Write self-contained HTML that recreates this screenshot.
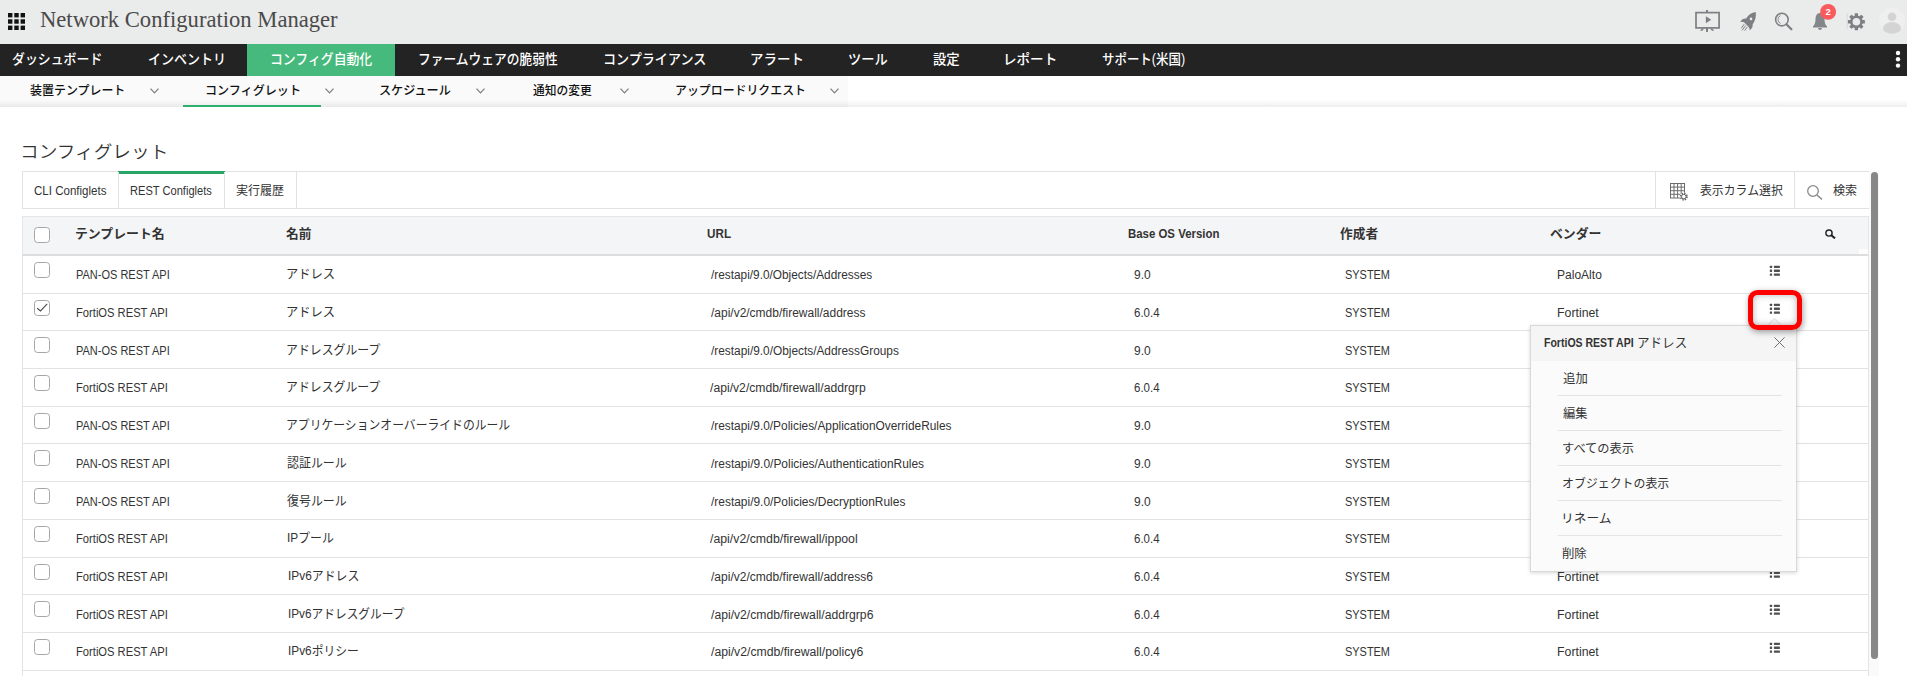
<!DOCTYPE html>
<html lang="ja"><head><meta charset="utf-8"><title>Network Configuration Manager</title>
<style>
*{box-sizing:border-box;margin:0;padding:0}
html,body{width:1907px;height:676px;overflow:hidden;background:#fff}
body{position:relative;font-family:"Liberation Sans","Noto Sans CJK JP",sans-serif;font-size:12px;color:#333}
div,span,svg{position:absolute}
.tx{white-space:nowrap;transform-origin:0 50%}
#hdr{left:0;top:0;width:1907px;height:44px;background:#eaebeb}
#grid{left:8px;top:13px}
.ttl{top:7.4px;font-family:"Liberation Serif",serif;font-size:22.9px;line-height:26px;color:#4a4a4a}
#hdr_right{left:1685px;top:0}
#nav{left:0;top:44px;width:1907px;height:32px;background:#232323}
#nav .act{left:247px;top:0;width:148px;height:32px;background:#46b97c}
.n{font-weight:500;top:44px;height:32px;line-height:30px;color:#fff;font-size:14px}
#dots{left:1895px;top:50.2px}
#sub{left:0;top:76px;width:848px;height:31px;background:#fafafa}
#subsh{left:0;top:100px;width:1907px;height:7.2px;background:linear-gradient(rgba(0,0,0,0),rgba(0,0,0,.065))}
#subul{left:183px;top:104.8px;width:138px;height:2.3px;background:#2eb06d}
.s{font-weight:500;top:76px;height:28px;line-height:30px;font-size:12.2px;color:#111}
.chev{top:88px}
.h1{top:137.5px;font-size:17.5px;line-height:28px;font-weight:350;color:#333}
#tabs{left:22px;top:171px;width:1848px;height:38px;border:1px solid #e2e2e2;background:#fff}
#tabs .d{top:0;width:1px;height:36px;background:#e2e2e2}
#tabs .g{left:95px;top:-1px;width:107px;height:3px;background:#27a567}
.t{top:172px;height:36px;line-height:39.4px;font-size:12px;color:#333}
.tj{line-height:39px}
#colsel{left:1670px;top:183px}
#search_thin{left:1806.5px;top:184.5px}
#th{left:22px;top:216px;width:1847px;height:40px;background:#f4f5f6;border:1px solid #e6e6e6;border-bottom:2px solid #dddddd}
#thfix{left:1859px;top:249px;width:9px;height:5px;background:#fdfdfd}
.h{top:216px;height:38px;line-height:36px;font-size:12.6px;font-weight:bold;color:#333}
#search_bold{left:1825px;top:228.5px}
.cb{width:15.5px;height:15.5px;border:1px solid #a6a6a6;border-radius:3.5px;background:#fff}
.cb svg{left:0;top:0}
#tb{left:22px;top:256px;width:1847px;height:420px;border-left:1px solid #e4e4e4;border-right:1px solid #e4e4e4}
.rl{left:23px;width:1845px;height:1px;background:#e2e2e2}
.c{height:36.7px;line-height:39.8px;font-size:12px;color:#333}
.cj{font-size:12.6px;line-height:37.6px}
.li{left:1769px}
#sbt{left:1869px;top:171px;width:10px;height:505px;background:#fafafa}
#sb{left:1871px;top:171.6px;width:7px;height:487.4px;border-radius:3.5px;background:#878787}
#red{left:1748px;top:290px;width:54px;height:40px;border:5px solid #fe0000;border-radius:9.5px;box-shadow:1px 2px 6px rgba(0,0,0,.38), inset 0 0 7px rgba(0,0,0,.3)}
#pop{left:1530px;top:325px;width:267px;height:246.6px;background:#fbfbfb;border:1px solid #d9d9d9;box-shadow:0 1px 4px rgba(0,0,0,.16)}
#pop .ph{left:0;top:0;width:265px;height:35.3px;background:#f5f5f5}
#pop .sp{left:26.8px;width:224px;height:1px;background:#e4e4e4}
#arrow{left:238.3px;top:-5.6px;width:11px;height:11px;background:#f7f7f7;border:1px solid #e6e6e6;transform:rotate(45deg)}
.pt{top:326px;line-height:35px;font-size:12px;font-weight:bold;color:#333}
.ptj{font-weight:normal;font-size:13px;line-height:34px}
.x{left:1774.2px;top:336.8px}
.pi{height:35px;line-height:38px;font-size:12px;color:#333}

</style></head><body>
<div id="hdr"></div>
<svg id="grid" width="17" height="17" viewBox="0 0 17 17"><g fill="#111"><rect x="0" y="0" width="4.4" height="4.4"/><rect x="6.3" y="0" width="4.4" height="4.4"/><rect x="12.6" y="0" width="4.4" height="4.4"/><rect x="0" y="6.3" width="4.4" height="4.4"/><rect x="6.3" y="6.3" width="4.4" height="4.4"/><rect x="12.6" y="6.3" width="4.4" height="4.4"/><rect x="0" y="12.6" width="4.4" height="4.4"/><rect x="6.3" y="12.6" width="4.4" height="4.4"/><rect x="12.6" y="12.6" width="4.4" height="4.4"/></g></svg>
<div class="tx ttl" style="left:39.66px;transform:scaleX(0.9878)">Network Configuration Manager</div>
<svg id="hdr_right" width="222" height="44" viewBox="1685 0 222 44">
<g fill="none" stroke="#7c8083" stroke-width="1.7"><rect x="1696" y="12.6" width="23.1" height="15.3"/></g>
<g fill="#7c8083"><rect x="1706" y="10" width="2" height="2.4"/><rect x="1706" y="28" width="2" height="3.9"/><path d="M1702 28.4 L1704.2 28.4 L1702.3 30.8 L1700 30.8 Z"/><path d="M1710 28.4 L1712.2 28.4 L1714.2 30.8 L1712 30.8 Z"/><path d="M1705.9 16.2 L1711.2 19.7 L1705.9 23.2 Z"/></g>
<g fill="#7c8083"><path d="M1755.8 12.1 C1751.5 12.6 1748.3 14.9 1746.2 18.6 C1744 18.2 1741.8 19.3 1740 22 C1741.6 21.7 1743 21.9 1744.3 22.6 L1748.6 26.9 C1749.4 27.9 1749.8 29 1749.5 30.4 C1752 28.8 1753 26.7 1752.6 24.5 C1755.2 21.4 1756.3 16.6 1755.8 12.1 Z"/></g>
<circle cx="1751" cy="18.9" r="1.35" fill="#eaebeb"/>
<g stroke="#7c8083" stroke-width="1" fill="none"><path d="M1744.2 24.2 L1741.3 28.2 M1745.7 25.5 L1742 30.4 M1747.3 27 L1744.6 30.6"/></g>
<circle cx="1781.9" cy="19.6" r="6.3" fill="none" stroke="#7c8083" stroke-width="1.6"/>
<path d="M1786.4 24.3 L1791.4 29.3" stroke="#7c8083" stroke-width="2.2" stroke-linecap="round" fill="none"/>
<path d="M1780.6 15.6 A4.2 4.2 0 0 0 1780.6 23.4" fill="none" stroke="#8b8f92" stroke-width="1"/>
<path d="M1820 13 C1816.6 13 1815.6 16 1815.5 19.5 C1815.4 23 1814.6 25 1813 26.3 L1813 27.4 L1827 27.4 L1827 26.3 C1825.4 25 1824.6 23 1824.5 19.5 C1824.4 16 1823.4 13 1820 13 Z" fill="#83878a"/>
<path d="M1818.1 28 L1821.9 28 C1821.9 29.3 1821 30 1820 30 C1819 30 1818.1 29.3 1818.1 28 Z" fill="#83878a"/>
<circle cx="1828.1" cy="11.9" r="7.95" fill="#f95a5e"/>
<text x="1828.1" y="15.4" text-anchor="middle" font-family="Liberation Sans, sans-serif" font-size="9.6" font-weight="bold" fill="#fff">2</text>
<rect x="1846.7" y="13" width="1" height="15.6" fill="#d9d9da"/>
<g transform="translate(1856.4 21.8)" fill="#7c8083"><g id="teeth"><rect x="-1.7" y="-8.5" width="3.4" height="17" rx=".6"/><rect x="-1.7" y="-8.5" width="3.4" height="17" rx=".6" transform="rotate(45)"/><rect x="-1.7" y="-8.5" width="3.4" height="17" rx=".6" transform="rotate(90)"/><rect x="-1.7" y="-8.5" width="3.4" height="17" rx=".6" transform="rotate(135)"/></g><circle r="6.4"/><circle r="3.8" fill="#eaebeb"/></g>
<defs><clipPath id="av"><circle cx="1892" cy="20.8" r="13"/></clipPath></defs>
<circle cx="1892" cy="20.8" r="13" fill="#efefef"/>
<g clip-path="url(#av)" fill="#d4d4d4"><circle cx="1892" cy="16.8" r="4.3"/><ellipse cx="1892" cy="28.6" rx="9" ry="6.6"/></g>
</svg>
<div id="nav"><div class="act"></div></div>
<div class="tx n" style="left:12.34px;transform:scaleX(0.9212)">ダッシュボード</div>
<div class="tx n" style="left:148.05px;transform:scaleX(0.9273)">インベントリ</div>
<div class="tx n" style="left:270.32px;transform:scaleX(0.9182)">コンフィグ自動化</div>
<div class="tx n" style="left:417.96px;transform:scaleX(0.9090)">ファームウェアの脆弱性</div>
<div class="tx n" style="left:602.79px;transform:scaleX(0.9331)">コンプライアンス</div>
<div class="tx n" style="left:750.05px;transform:scaleX(0.9616)">アラート</div>
<div class="tx n" style="left:847.60px;transform:scaleX(0.9437)">ツール</div>
<div class="tx n" style="left:933.49px;transform:scaleX(0.9541)">設定</div>
<div class="tx n" style="left:1003.44px;transform:scaleX(0.9684)">レポート</div>
<div class="tx n" style="left:1102.43px;transform:scaleX(0.8898)">サポート(米国)</div>
<svg id="dots" width="6" height="20" viewBox="0 0 6 20"><g fill="#fff"><circle cx="3" cy="3" r="2.2"/><circle cx="3" cy="9.3" r="2.2"/><circle cx="3" cy="15.6" r="2.2"/></g></svg>
<div id="sub"></div><div id="subsh"></div><div id="subul"></div>
<div class="tx s" style="left:30.42px;transform:scaleX(0.9815)">装置テンプレート</div>
<svg class="chev" style="left:150.3px" width="9" height="6" viewBox="0 0 9 6"><path d="M.5 .6 L4.5 4.9 L8.5 .6" fill="none" stroke="#808080" stroke-width="1.3"/></svg>
<div class="tx s" style="left:204.54px;transform:scaleX(0.9903)">コンフィグレット</div>
<svg class="chev" style="left:324.7px" width="9" height="6" viewBox="0 0 9 6"><path d="M.5 .6 L4.5 4.9 L8.5 .6" fill="none" stroke="#808080" stroke-width="1.3"/></svg>
<div class="tx s" style="left:378.82px;transform:scaleX(0.9924)">スケジュール</div>
<svg class="chev" style="left:476.0px" width="9" height="6" viewBox="0 0 9 6"><path d="M.5 .6 L4.5 4.9 L8.5 .6" fill="none" stroke="#808080" stroke-width="1.3"/></svg>
<div class="tx s" style="left:533.16px;transform:scaleX(0.9618)">通知の変更</div>
<svg class="chev" style="left:619.5px" width="9" height="6" viewBox="0 0 9 6"><path d="M.5 .6 L4.5 4.9 L8.5 .6" fill="none" stroke="#808080" stroke-width="1.3"/></svg>
<div class="tx s" style="left:674.65px;transform:scaleX(0.9771)">アップロードリクエスト</div>
<svg class="chev" style="left:829.9px" width="9" height="6" viewBox="0 0 9 6"><path d="M.5 .6 L4.5 4.9 L8.5 .6" fill="none" stroke="#808080" stroke-width="1.3"/></svg>
<div class="tx h1" style="left:19.81px;transform:scaleX(1.0659)">コンフィグレット</div>
<div id="tabs"><div class="g"></div><div class="d" style="left:95px"></div><div class="d" style="left:201px"></div><div class="d" style="left:273px"></div><div class="d" style="left:1632px"></div><div class="d" style="left:1771px"></div></div>
<div class="tx t" style="left:34.22px;transform:scaleX(0.9620)">CLI Configlets</div>
<div class="tx t" style="left:130.47px;transform:scaleX(0.9254)">REST Configlets</div>
<div class="tx t tj" style="left:236.44px;transform:scaleX(1.0031)">実行履歴</div>
<svg id="colsel" width="19" height="19" viewBox="0 0 19 19"><g fill="none" stroke="#6c6c6c" stroke-width="1"><rect x=".5" y=".5" width="14" height="14.5"/><path d="M4 .5 V15 M7.6 .5 V15 M11.2 .5 V15 M.5 4.1 H14.5 M.5 7.7 H14.5 M.5 11.3 H14.5"/></g><circle cx="13.8" cy="13.6" r="4.2" fill="#fff"/><circle cx="13.8" cy="13.6" r="3.1" fill="none" stroke="#666" stroke-width="1.9" stroke-dasharray="1.3 1.13"/><circle cx="13.8" cy="13.6" r="2.3" fill="none" stroke="#666" stroke-width="1"/></svg>
<div class="tx t tj" style="left:1700.09px;transform:scaleX(0.9894)">表示カラム選択</div>
<svg id="search_thin" width="16" height="15" viewBox="0 0 16 15"><circle cx="6" cy="6" r="5.3" fill="none" stroke="#8a8a8a" stroke-width="1.3"/><path d="M10 10 L15 14.4" stroke="#8a8a8a" stroke-width="1.4" fill="none"/></svg>
<div class="tx t tj" style="left:1833.31px;transform:scaleX(1.0085)">検索</div>
<div id="th"></div><div id="thfix"></div>
<span class="cb" style="left:34px;top:227px"></span>
<div class="tx h hj" style="left:74.84px;transform:scaleX(1.0222)">テンプレート名</div>
<div class="tx h hj" style="left:286.21px;transform:scaleX(1.0053)">名前</div>
<div class="tx h" style="left:707.18px;transform:scaleX(0.9278)">URL</div>
<div class="tx h" style="left:1128.47px;transform:scaleX(0.9068)">Base OS Version</div>
<div class="tx h hj" style="left:1339.60px;transform:scaleX(1.0100)">作成者</div>
<div class="tx h hj" style="left:1549.73px;transform:scaleX(1.0211)">ベンダー</div>
<svg id="search_bold" width="11" height="10" viewBox="0 0 11 10"><circle cx="4" cy="4" r="3.1" fill="none" stroke="#222" stroke-width="1.45"/><path d="M6.3 6.2 L10 9.3" stroke="#222" stroke-width="2.1" fill="none"/></svg>
<div id="tb"></div>
<div class="rl" style="top:293px"></div>
<span class="cb" style="left:34px;top:262.2px"></span>
<div class="tx c" style="left:75.51px;transform:scaleX(0.9165);top:256.30px">PAN-OS REST API</div>
<div class="tx c cj" style="left:286.45px;transform:scaleX(0.9756);top:256.30px">アドレス</div>
<div class="tx c" style="left:710.71px;transform:scaleX(0.9860);top:256.30px">/restapi/9.0/Objects/Addresses</div>
<div class="tx c" style="left:1134.13px;transform:scaleX(0.9963);top:256.30px">9.0</div>
<div class="tx c" style="left:1345.36px;transform:scaleX(0.9117);top:256.30px">SYSTEM</div>
<div class="tx c" style="left:1556.56px;transform:scaleX(1.0031);top:256.30px">PaloAlto</div>
<svg class="li" style="top:265.2px" width="12" height="12" viewBox="0 0 12 12"><g fill="#505050"><rect x="0.8" y="0.7" width="2.3" height="2.3" rx=".5"/><rect x="4.9" y="0.7" width="6" height="2.3" rx=".4"/><rect x="0.8" y="4.6" width="2.3" height="2.3" rx=".5"/><rect x="4.9" y="4.6" width="6" height="2.3" rx=".4"/><rect x="0.8" y="8.5" width="2.3" height="2.3" rx=".5"/><rect x="4.9" y="8.5" width="6" height="2.3" rx=".4"/></g></svg>
<div class="rl" style="top:330px"></div>
<span class="cb" style="left:34px;top:300.2px"><svg width="13" height="13" viewBox="0 0 13 13"><path d="M2.2 7.2 L5.5 9.9 L12.2 2.9" fill="none" stroke="#4a4a4a" stroke-width="1.1"/></svg></span>
<div class="tx c" style="left:75.92px;transform:scaleX(0.9317);top:294.00px">FortiOS REST API</div>
<div class="tx c cj" style="left:286.45px;transform:scaleX(0.9756);top:294.00px">アドレス</div>
<div class="tx c" style="left:710.73px;transform:scaleX(0.9981);top:294.00px">/api/v2/cmdb/firewall/address</div>
<div class="tx c" style="left:1134.16px;transform:scaleX(0.9559);top:294.00px">6.0.4</div>
<div class="tx c" style="left:1345.36px;transform:scaleX(0.9117);top:294.00px">SYSTEM</div>
<div class="tx c" style="left:1557.25px;transform:scaleX(1.0274);top:294.00px">Fortinet</div>
<svg class="li" style="top:303.2px" width="12" height="12" viewBox="0 0 12 12"><g fill="#505050"><rect x="0.8" y="0.7" width="2.3" height="2.3" rx=".5"/><rect x="4.9" y="0.7" width="6" height="2.3" rx=".4"/><rect x="0.8" y="4.6" width="2.3" height="2.3" rx=".5"/><rect x="4.9" y="4.6" width="6" height="2.3" rx=".4"/><rect x="0.8" y="8.5" width="2.3" height="2.3" rx=".5"/><rect x="4.9" y="8.5" width="6" height="2.3" rx=".4"/></g></svg>
<div class="rl" style="top:368px"></div>
<span class="cb" style="left:34px;top:337.2px"></span>
<div class="tx c" style="left:75.51px;transform:scaleX(0.9165);top:331.70px">PAN-OS REST API</div>
<div class="tx c cj" style="left:286.33px;transform:scaleX(0.9435);top:331.70px">アドレスグループ</div>
<div class="tx c" style="left:710.71px;transform:scaleX(0.9882);top:331.70px">/restapi/9.0/Objects/AddressGroups</div>
<div class="tx c" style="left:1134.13px;transform:scaleX(0.9963);top:331.70px">9.0</div>
<div class="tx c" style="left:1345.36px;transform:scaleX(0.9117);top:331.70px">SYSTEM</div>
<div class="tx c" style="left:1556.56px;transform:scaleX(1.0031);top:331.70px">PaloAlto</div>
<svg class="li" style="top:340.2px" width="12" height="12" viewBox="0 0 12 12"><g fill="#505050"><rect x="0.8" y="0.7" width="2.3" height="2.3" rx=".5"/><rect x="4.9" y="0.7" width="6" height="2.3" rx=".4"/><rect x="0.8" y="4.6" width="2.3" height="2.3" rx=".5"/><rect x="4.9" y="4.6" width="6" height="2.3" rx=".4"/><rect x="0.8" y="8.5" width="2.3" height="2.3" rx=".5"/><rect x="4.9" y="8.5" width="6" height="2.3" rx=".4"/></g></svg>
<div class="rl" style="top:406px"></div>
<span class="cb" style="left:34px;top:375.2px"></span>
<div class="tx c" style="left:75.92px;transform:scaleX(0.9317);top:369.40px">FortiOS REST API</div>
<div class="tx c cj" style="left:286.33px;transform:scaleX(0.9435);top:369.40px">アドレスグループ</div>
<div class="tx c" style="left:710.28px;transform:scaleX(1.0147);top:369.40px">/api/v2/cmdb/firewall/addrgrp</div>
<div class="tx c" style="left:1134.16px;transform:scaleX(0.9559);top:369.40px">6.0.4</div>
<div class="tx c" style="left:1345.36px;transform:scaleX(0.9117);top:369.40px">SYSTEM</div>
<div class="tx c" style="left:1557.25px;transform:scaleX(1.0274);top:369.40px">Fortinet</div>
<svg class="li" style="top:378.2px" width="12" height="12" viewBox="0 0 12 12"><g fill="#505050"><rect x="0.8" y="0.7" width="2.3" height="2.3" rx=".5"/><rect x="4.9" y="0.7" width="6" height="2.3" rx=".4"/><rect x="0.8" y="4.6" width="2.3" height="2.3" rx=".5"/><rect x="4.9" y="4.6" width="6" height="2.3" rx=".4"/><rect x="0.8" y="8.5" width="2.3" height="2.3" rx=".5"/><rect x="4.9" y="8.5" width="6" height="2.3" rx=".4"/></g></svg>
<div class="rl" style="top:443px"></div>
<span class="cb" style="left:34px;top:413.2px"></span>
<div class="tx c" style="left:75.51px;transform:scaleX(0.9165);top:407.10px">PAN-OS REST API</div>
<div class="tx c cj" style="left:286.35px;transform:scaleX(0.9384);top:407.10px">アプリケーションオーバーライドのルール</div>
<div class="tx c" style="left:710.71px;transform:scaleX(0.9907);top:407.10px">/restapi/9.0/Policies/ApplicationOverrideRules</div>
<div class="tx c" style="left:1134.13px;transform:scaleX(0.9963);top:407.10px">9.0</div>
<div class="tx c" style="left:1345.36px;transform:scaleX(0.9117);top:407.10px">SYSTEM</div>
<div class="tx c" style="left:1556.56px;transform:scaleX(1.0031);top:407.10px">PaloAlto</div>
<svg class="li" style="top:416.2px" width="12" height="12" viewBox="0 0 12 12"><g fill="#505050"><rect x="0.8" y="0.7" width="2.3" height="2.3" rx=".5"/><rect x="4.9" y="0.7" width="6" height="2.3" rx=".4"/><rect x="0.8" y="4.6" width="2.3" height="2.3" rx=".5"/><rect x="4.9" y="4.6" width="6" height="2.3" rx=".4"/><rect x="0.8" y="8.5" width="2.3" height="2.3" rx=".5"/><rect x="4.9" y="8.5" width="6" height="2.3" rx=".4"/></g></svg>
<div class="rl" style="top:481px"></div>
<span class="cb" style="left:34px;top:450.2px"></span>
<div class="tx c" style="left:75.51px;transform:scaleX(0.9165);top:444.80px">PAN-OS REST API</div>
<div class="tx c cj" style="left:287.19px;transform:scaleX(0.9495);top:444.80px">認証ルール</div>
<div class="tx c" style="left:710.66px;transform:scaleX(0.9952);top:444.80px">/restapi/9.0/Policies/AuthenticationRules</div>
<div class="tx c" style="left:1134.13px;transform:scaleX(0.9963);top:444.80px">9.0</div>
<div class="tx c" style="left:1345.36px;transform:scaleX(0.9117);top:444.80px">SYSTEM</div>
<div class="tx c" style="left:1556.56px;transform:scaleX(1.0031);top:444.80px">PaloAlto</div>
<svg class="li" style="top:453.2px" width="12" height="12" viewBox="0 0 12 12"><g fill="#505050"><rect x="0.8" y="0.7" width="2.3" height="2.3" rx=".5"/><rect x="4.9" y="0.7" width="6" height="2.3" rx=".4"/><rect x="0.8" y="4.6" width="2.3" height="2.3" rx=".5"/><rect x="4.9" y="4.6" width="6" height="2.3" rx=".4"/><rect x="0.8" y="8.5" width="2.3" height="2.3" rx=".5"/><rect x="4.9" y="8.5" width="6" height="2.3" rx=".4"/></g></svg>
<div class="rl" style="top:519px"></div>
<span class="cb" style="left:34px;top:488.2px"></span>
<div class="tx c" style="left:75.51px;transform:scaleX(0.9165);top:482.50px">PAN-OS REST API</div>
<div class="tx c cj" style="left:287.17px;transform:scaleX(0.9492);top:482.50px">復号ルール</div>
<div class="tx c" style="left:710.68px;transform:scaleX(0.9945);top:482.50px">/restapi/9.0/Policies/DecryptionRules</div>
<div class="tx c" style="left:1134.13px;transform:scaleX(0.9963);top:482.50px">9.0</div>
<div class="tx c" style="left:1345.36px;transform:scaleX(0.9117);top:482.50px">SYSTEM</div>
<div class="tx c" style="left:1556.56px;transform:scaleX(1.0031);top:482.50px">PaloAlto</div>
<svg class="li" style="top:491.2px" width="12" height="12" viewBox="0 0 12 12"><g fill="#505050"><rect x="0.8" y="0.7" width="2.3" height="2.3" rx=".5"/><rect x="4.9" y="0.7" width="6" height="2.3" rx=".4"/><rect x="0.8" y="4.6" width="2.3" height="2.3" rx=".5"/><rect x="4.9" y="4.6" width="6" height="2.3" rx=".4"/><rect x="0.8" y="8.5" width="2.3" height="2.3" rx=".5"/><rect x="4.9" y="8.5" width="6" height="2.3" rx=".4"/></g></svg>
<div class="rl" style="top:557px"></div>
<span class="cb" style="left:34px;top:526.2px"></span>
<div class="tx c" style="left:75.92px;transform:scaleX(0.9317);top:520.20px">FortiOS REST API</div>
<div class="tx c cj" style="left:287.10px;transform:scaleX(0.9428);top:520.20px">IPプール</div>
<div class="tx c" style="left:710.31px;transform:scaleX(1.0251);top:520.20px">/api/v2/cmdb/firewall/ippool</div>
<div class="tx c" style="left:1134.16px;transform:scaleX(0.9559);top:520.20px">6.0.4</div>
<div class="tx c" style="left:1345.36px;transform:scaleX(0.9117);top:520.20px">SYSTEM</div>
<div class="tx c" style="left:1557.25px;transform:scaleX(1.0274);top:520.20px">Fortinet</div>
<svg class="li" style="top:529.2px" width="12" height="12" viewBox="0 0 12 12"><g fill="#505050"><rect x="0.8" y="0.7" width="2.3" height="2.3" rx=".5"/><rect x="4.9" y="0.7" width="6" height="2.3" rx=".4"/><rect x="0.8" y="4.6" width="2.3" height="2.3" rx=".5"/><rect x="4.9" y="4.6" width="6" height="2.3" rx=".4"/><rect x="0.8" y="8.5" width="2.3" height="2.3" rx=".5"/><rect x="4.9" y="8.5" width="6" height="2.3" rx=".4"/></g></svg>
<div class="rl" style="top:594px"></div>
<span class="cb" style="left:34px;top:564.2px"></span>
<div class="tx c" style="left:75.92px;transform:scaleX(0.9317);top:557.90px">FortiOS REST API</div>
<div class="tx c cj" style="left:287.60px;transform:scaleX(0.9433);top:557.90px">IPv6アドレス</div>
<div class="tx c" style="left:710.63px;transform:scaleX(1.0032);top:557.90px">/api/v2/cmdb/firewall/address6</div>
<div class="tx c" style="left:1134.16px;transform:scaleX(0.9559);top:557.90px">6.0.4</div>
<div class="tx c" style="left:1345.36px;transform:scaleX(0.9117);top:557.90px">SYSTEM</div>
<div class="tx c" style="left:1557.25px;transform:scaleX(1.0274);top:557.90px">Fortinet</div>
<svg class="li" style="top:567.2px" width="12" height="12" viewBox="0 0 12 12"><g fill="#505050"><rect x="0.8" y="0.7" width="2.3" height="2.3" rx=".5"/><rect x="4.9" y="0.7" width="6" height="2.3" rx=".4"/><rect x="0.8" y="4.6" width="2.3" height="2.3" rx=".5"/><rect x="4.9" y="4.6" width="6" height="2.3" rx=".4"/><rect x="0.8" y="8.5" width="2.3" height="2.3" rx=".5"/><rect x="4.9" y="8.5" width="6" height="2.3" rx=".4"/></g></svg>
<div class="rl" style="top:632px"></div>
<span class="cb" style="left:34px;top:601.2px"></span>
<div class="tx c" style="left:75.92px;transform:scaleX(0.9317);top:595.60px">FortiOS REST API</div>
<div class="tx c cj" style="left:287.67px;transform:scaleX(0.9311);top:595.60px">IPv6アドレスグループ</div>
<div class="tx c" style="left:710.87px;transform:scaleX(1.0145);top:595.60px">/api/v2/cmdb/firewall/addrgrp6</div>
<div class="tx c" style="left:1134.16px;transform:scaleX(0.9559);top:595.60px">6.0.4</div>
<div class="tx c" style="left:1345.36px;transform:scaleX(0.9117);top:595.60px">SYSTEM</div>
<div class="tx c" style="left:1557.25px;transform:scaleX(1.0274);top:595.60px">Fortinet</div>
<svg class="li" style="top:604.2px" width="12" height="12" viewBox="0 0 12 12"><g fill="#505050"><rect x="0.8" y="0.7" width="2.3" height="2.3" rx=".5"/><rect x="4.9" y="0.7" width="6" height="2.3" rx=".4"/><rect x="0.8" y="4.6" width="2.3" height="2.3" rx=".5"/><rect x="4.9" y="4.6" width="6" height="2.3" rx=".4"/><rect x="0.8" y="8.5" width="2.3" height="2.3" rx=".5"/><rect x="4.9" y="8.5" width="6" height="2.3" rx=".4"/></g></svg>
<div class="rl" style="top:670px"></div>
<span class="cb" style="left:34px;top:639.2px"></span>
<div class="tx c" style="left:75.92px;transform:scaleX(0.9317);top:633.30px">FortiOS REST API</div>
<div class="tx c cj" style="left:287.71px;transform:scaleX(0.9386);top:633.30px">IPv6ポリシー</div>
<div class="tx c" style="left:710.86px;transform:scaleX(1.0187);top:633.30px">/api/v2/cmdb/firewall/policy6</div>
<div class="tx c" style="left:1134.16px;transform:scaleX(0.9559);top:633.30px">6.0.4</div>
<div class="tx c" style="left:1345.36px;transform:scaleX(0.9117);top:633.30px">SYSTEM</div>
<div class="tx c" style="left:1557.25px;transform:scaleX(1.0274);top:633.30px">Fortinet</div>
<svg class="li" style="top:642.2px" width="12" height="12" viewBox="0 0 12 12"><g fill="#505050"><rect x="0.8" y="0.7" width="2.3" height="2.3" rx=".5"/><rect x="4.9" y="0.7" width="6" height="2.3" rx=".4"/><rect x="0.8" y="4.6" width="2.3" height="2.3" rx=".5"/><rect x="4.9" y="4.6" width="6" height="2.3" rx=".4"/><rect x="0.8" y="8.5" width="2.3" height="2.3" rx=".5"/><rect x="4.9" y="8.5" width="6" height="2.3" rx=".4"/></g></svg>
<div id="sbt"></div><div id="sb"></div>
<div id="pop"><div id="arrow"></div><div class="ph"></div><div class="sp" style="top:69.2px"></div><div class="sp" style="top:104.2px"></div><div class="sp" style="top:139.2px"></div><div class="sp" style="top:174.2px"></div><div class="sp" style="top:209.2px"></div></div>
<div id="red"></div>
<div class="tx pt" style="left:1544.21px;transform:scaleX(0.8768)">FortiOS REST API</div>
<div class="tx pt ptj" style="left:1637.24px;transform:scaleX(0.9658)">アドレス</div>
<svg class="x" width="11" height="11" viewBox="0 0 11 11"><path d="M.4 .4 L10.6 10.6 M10.6 .4 L.4 10.6" stroke="#707070" stroke-width="1" fill="none"/></svg>
<div class="tx pi" style="left:1562.70px;transform:scaleX(1.0336);top:360.00px">追加</div>
<div class="tx pi" style="left:1562.80px;transform:scaleX(1.0203);top:395.00px">編集</div>
<div class="tx pi" style="left:1561.69px;transform:scaleX(1.0196);top:430.00px">すべての表示</div>
<div class="tx pi" style="left:1561.56px;transform:scaleX(0.9928);top:465.00px">オブジェクトの表示</div>
<div class="tx pi" style="left:1560.62px;transform:scaleX(1.0610);top:500.00px">リネーム</div>
<div class="tx pi" style="left:1562.06px;transform:scaleX(1.0310);top:535.00px">削除</div>
</body></html>
